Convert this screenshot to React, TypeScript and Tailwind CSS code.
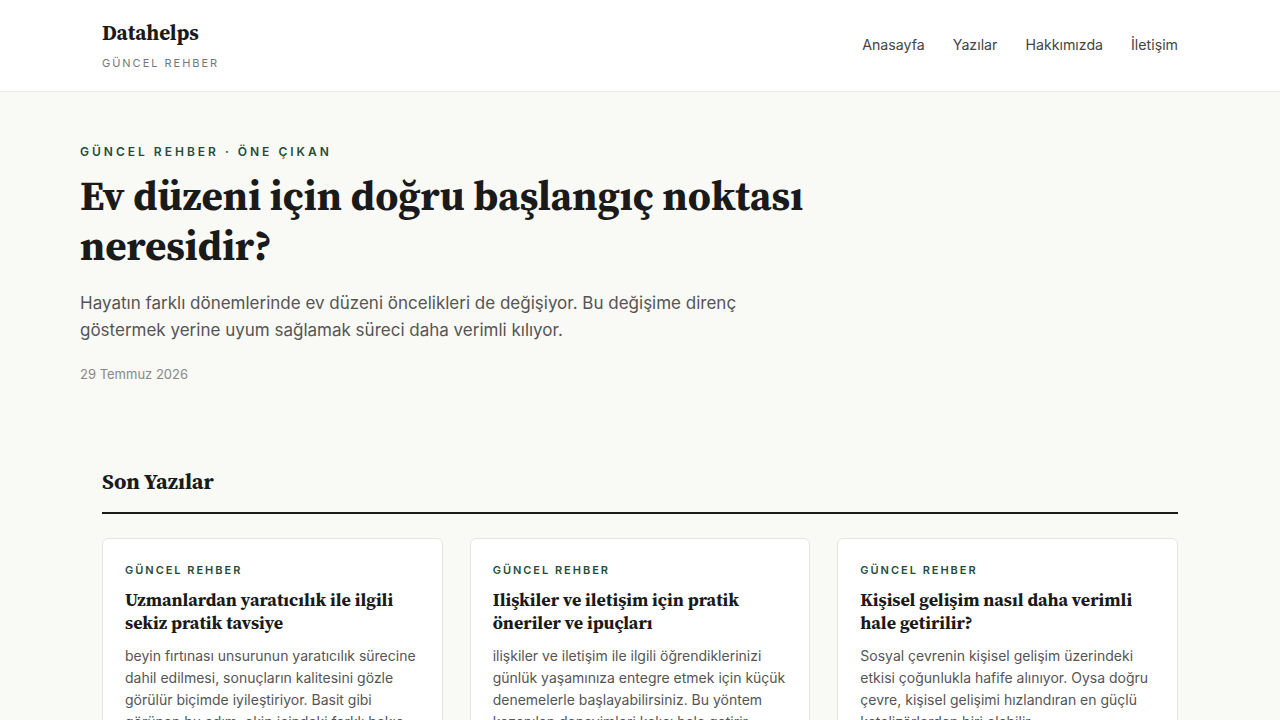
import React from "react";

const serif = "font-['Source_Serif_4','Liberation_Serif',Georgia,serif]";

const posts = [
  {
    title: "Uzmanlardan yaratıcılık ile ilgili sekiz pratik tavsiye",
    excerpt:
      "beyin fırtınası unsurunun yaratıcılık sürecine dahil edilmesi, sonuçların kalitesini gözle görülür biçimde iyileştiriyor. Basit gibi görünen bu adım, ekip içindeki farklı bakış açılarını ortaya çıkarıyor.",
  },
  {
    title: "Ilişkiler ve iletişim için pratik öneriler ve ipuçları",
    excerpt:
      "ilişkiler ve iletişim ile ilgili öğrendiklerinizi günlük yaşamınıza entegre etmek için küçük denemelerle başlayabilirsiniz. Bu yöntem kazanılan deneyimleri kalıcı hale getirir.",
  },
  {
    title: "Kişisel gelişim nasıl daha verimli hale getirilir?",
    excerpt:
      "Sosyal çevrenin kişisel gelişim üzerindeki etkisi çoğunlukla hafife alınıyor. Oysa doğru çevre, kişisel gelişimi hızlandıran en güçlü katalizörlerden biri olabilir.",
  },
];

export default function App() {
  return (
    <div className="min-h-screen bg-[#f9f9f6] font-['Inter','Liberation_Sans',sans-serif] text-[#1a1a1a]">
      {/* Header */}
      <header className="bg-white border-b border-[#e8e8e2]">
        <div className="mx-auto max-w-[1076px] h-[91px] flex items-center justify-between">
          <div className="flex flex-col">
            <span className={`${serif} text-[21px] font-bold leading-[28px] text-[#1a1a1a]`}>Datahelps</span>
            <span className="text-[11px] tracking-[0.18em] text-[#777] mt-[8px]">GÜNCEL REHBER</span>
          </div>
          <nav className="flex items-center gap-[28px] pb-[2px] text-[14.2px] text-[#444]">
            <a>Anasayfa</a>
            <a>Yazılar</a>
            <a>Hakkımızda</a>
            <a>İletişim</a>
          </nav>
        </div>
      </header>

      {/* Hero */}
      <section className="mx-auto max-w-[1120px] pt-[51px] pb-[82px]">
        <p className="text-[12px] font-semibold tracking-[0.25em] text-[#1f4d3a]">GÜNCEL REHBER · ÖNE ÇIKAN</p>
        <h1 className={`${serif} mt-[10px] max-w-[760px] text-[41px] font-bold leading-[50px] text-[#1a1a1a]`}>
          Ev düzeni için doğru başlangıç noktası neresidir?
        </h1>
        <p className="mt-[19px] max-w-[680px] text-[17px] leading-[27px] text-[#555]">
          Hayatın farklı dönemlerinde ev düzeni öncelikleri de değişiyor. Bu değişime direnç göstermek yerine uyum sağlamak süreci daha verimli kılıyor.
        </p>
        <p className="mt-[21px] text-[13px] text-[#888]">29 Temmuz 2026</p>
      </section>

      {/* Recent */}
      <section className="mx-auto max-w-[1076px]">
        <h2 className={`${serif} text-[22px] font-bold leading-[28px] pb-[17px] border-b-2 border-[#1a1a1a]`}>Son Yazılar</h2>
        <div className="mt-[24px] grid grid-cols-3 gap-[27px]">
          {posts.map((p) => (
            <article key={p.title} className="bg-white border border-[#e6e6e0] rounded-[6px] px-[22px] pt-[23px] pb-[24px]">
              <p className="text-[11px] font-semibold tracking-[0.18em] text-[#1f4d3a]">GÜNCEL REHBER</p>
              <h3 className={`${serif} mt-[10px] text-[18px] font-bold leading-[23px] text-[#1a1a1a]`}>{p.title}</h3>
              <p className="mt-[11px] text-[14px] leading-[22px] text-[#555]">{p.excerpt}</p>
            </article>
          ))}
        </div>
      </section>
    </div>
  );
}
